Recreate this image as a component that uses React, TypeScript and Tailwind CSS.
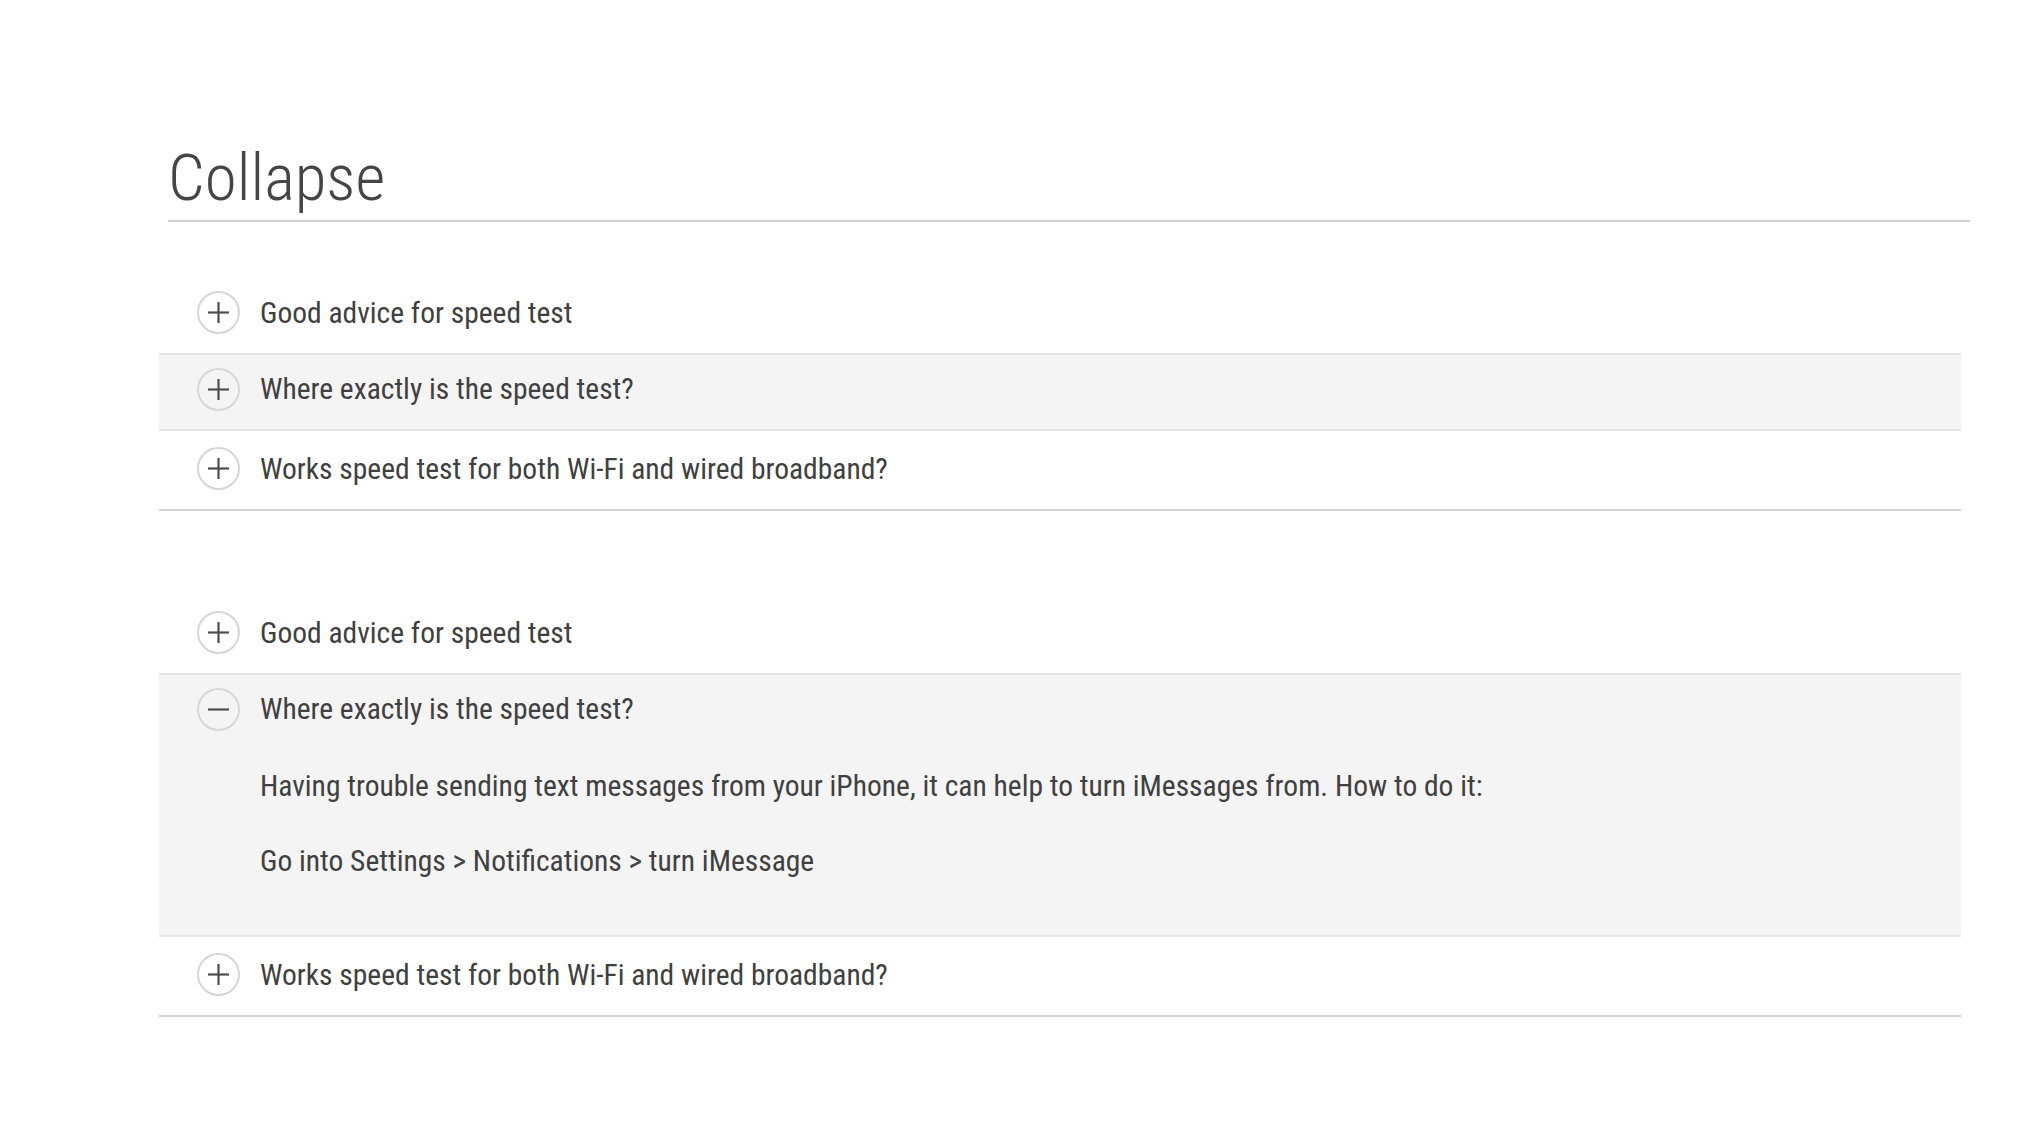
import { useState } from 'react';

type Item = { q: string; a?: string[] };

const items: Item[] = [
  { q: 'Good advice for speed test' },
  {
    q: 'Where exactly is the speed test?',
    a: [
      'Having trouble sending text messages from your iPhone, it can help to turn iMessages from. How to do it:',
      'Go into Settings > Notifications > turn iMessage',
    ],
  },
  { q: 'Works speed test for both Wi-Fi and wired broadband?' },
];

const ToggleIcon = ({ open }: { open: boolean }) => (
  <span className="w-[43px] h-[43px] shrink-0 rounded-full border-2 border-[#d6d6d6] flex items-center justify-center">
    <svg width="21" height="21" viewBox="0 0 21 21" fill="none" stroke="#4d4d4d" strokeWidth="2.2">
      <line x1="0" y1="10.5" x2="21" y2="10.5" />
      {!open && <line x1="10.5" y1="0" x2="10.5" y2="21" />}
    </svg>
  </span>
);

const Accordion = ({ initialOpen, highlight }: { initialOpen: number | null; highlight?: number }) => {
  const [open, setOpen] = useState<number | null>(initialOpen);

  return (
    <div className="w-[1802px]">
      {items.map((item, i) => {
        const isOpen = open === i;
        const last = i === items.length - 1;
        return (
          <div
            key={i}
            className={`border-b-2 ${last ? 'border-[#d4d4d4]' : 'border-[#e6e6e6]'} ${
              isOpen || highlight === i ? 'bg-[#f4f4f4]' : 'bg-white'
            }`}
          >
            <button
              onClick={() => setOpen(isOpen ? null : i)}
              className={`w-full flex items-center gap-[20px] pl-[38px] text-left ${
                last ? 'pt-[16px] pb-[19px]' : 'pt-[13px] pb-[18.5px]'
              }`}
            >
              <ToggleIcon open={isOpen} />
              <span className="text-[29.5px] leading-[38px] text-[#404040]">{item.q}</span>
            </button>
            {isOpen && item.a && (
              <div className="pl-[101px] pt-[18px] pb-[55px] flex flex-col gap-[37px]">
                {item.a.map((p) => (
                  <p key={p} className="text-[29.5px] leading-[38px] text-[#404040]">
                    {p}
                  </p>
                ))}
              </div>
            )}
          </div>
        );
      })}
    </div>
  );
};

export default function App() {
  return (
    <div
      className="min-h-screen bg-white pl-[159px] pt-[140px]"
      style={{ fontFamily: "'Roboto Condensed', 'DejaVu Sans Condensed', sans-serif" }}
    >
      <h1 className="ml-[9px] w-[1802px] border-b-2 border-[#d2d2d2] pb-[4px] text-[65px] leading-[76px] font-light text-[#454545]">
        Collapse
      </h1>
      <div className="mt-[56px]">
        <Accordion initialOpen={null} highlight={1} />
      </div>
      <div className="mt-[87px]">
        <Accordion initialOpen={1} />
      </div>
    </div>
  );
}
